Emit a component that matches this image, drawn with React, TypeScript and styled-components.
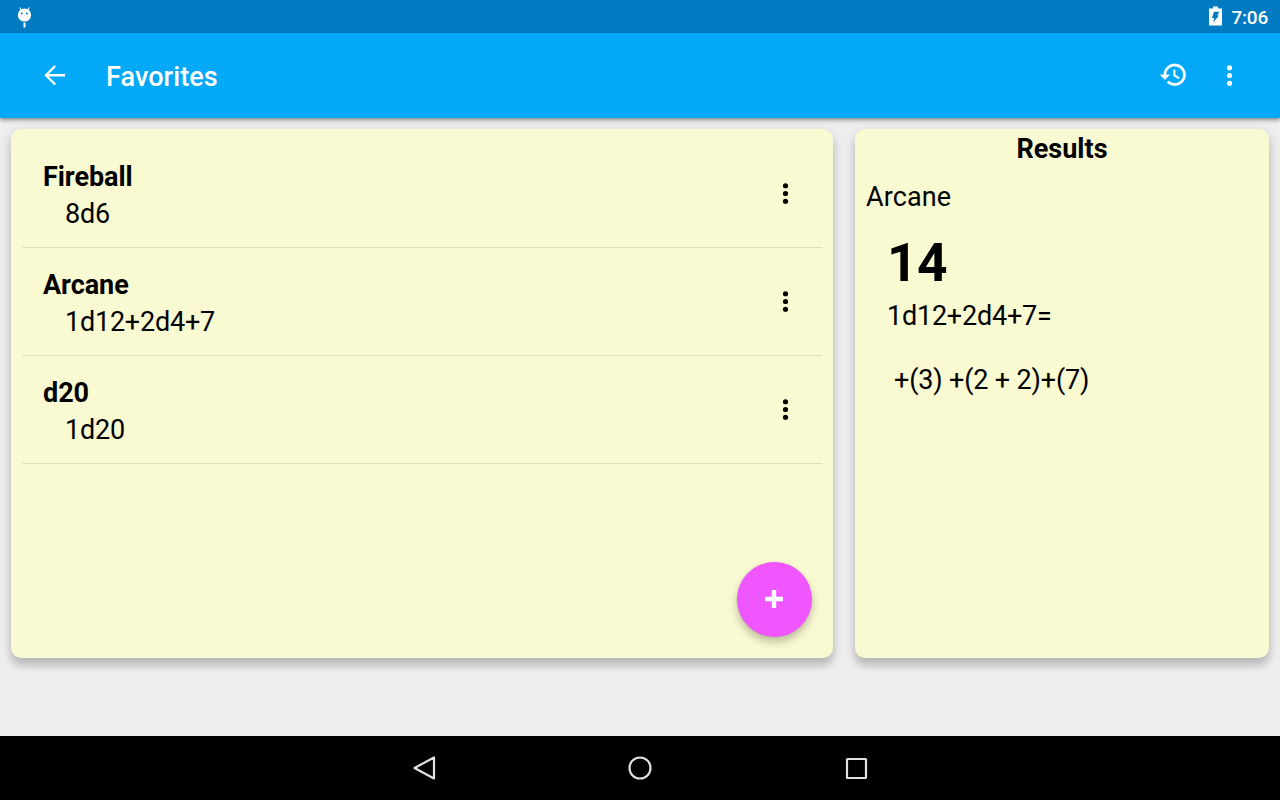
import React from "react";
import styled, { createGlobalStyle } from "styled-components";

const Global = createGlobalStyle`
  * { box-sizing: border-box; }
  body { margin: 0; font-family: Roboto, sans-serif; background: #eee; }
`;

const Screen = styled.div`
  width: 1280px;
  height: 800px;
  display: flex;
  flex-direction: column;
  overflow: hidden;
  background: #eee;
  color: #000;
`;

const StatusBar = styled.header`
  height: 33px;
  flex: none;
  display: flex;
  align-items: center;
  justify-content: space-between;
  padding: 0 12px 0 17px;
  background: #007ac1;
  color: #fff;
`;

const StatusGroup = styled.div`
  display: flex;
  align-items: flex-start;
  gap: 9px;
`;

const Clock = styled.span`
  font-size: 19px;
  font-weight: 500;
  line-height: 22px;
  padding-top: 2px;
  letter-spacing: -0.2px;
`;

const AppBar = styled.nav`
  height: 85px;
  flex: none;
  display: flex;
  align-items: center;
  padding: 0 35px 1px 39px;
  background: #03a9f6;
  color: #fff;
  box-shadow: 0 2px 4px rgba(0, 0, 0, 0.42);
`;

const Title = styled.h1`
  flex: 1;
  margin: 0 0 0 35px;
  padding-top: 4px;
  font-size: 27px;
  line-height: 32px;
  font-weight: 500;
  letter-spacing: 0.08px;
`;

const IconButton = styled.button<{ $gap?: number }>`
  display: flex;
  border: 0;
  padding: 0;
  margin-left: ${(p) => p.$gap ?? 0}px;
  background: none;
  color: inherit;
`;

const Content = styled.main`
  flex: 1;
  display: flex;
  align-items: flex-start;
  gap: 22px;
  padding: 11px 11px 0;
`;

const Card = styled.section<{ $width: number }>`
  width: ${(p) => p.$width}px;
  height: 529px;
  border-radius: 10px;
  background: #f9f9d2;
  box-shadow: 0 9px 7px rgba(0, 0, 0, 0.11), 0 4px 12px rgba(0, 0, 0, 0.17);
`;

const FavoritesCard = styled(Card)`
  display: flex;
  flex-direction: column;
  justify-content: space-between;
  padding: 11px 11px 21px;
`;

const List = styled.ul`
  list-style: none;
  margin: 0;
  padding: 0;
`;

const Row = styled.li`
  height: 108px;
  display: flex;
  justify-content: space-between;
  padding: 19px 21px 0;
  border-bottom: 1px solid #dfdfbc;
`;

const RowText = styled.div`
  font-size: 27px;
  line-height: 37px;
`;

const Name = styled.div`
  font-weight: 700;
  letter-spacing: -0.05px;
`;

const Formula = styled.div`
  padding-left: 22px;
  letter-spacing: -0.22px;
`;

const RowMenu = styled(IconButton)`
  height: 32px;
  margin-top: 18px;
`;

const AddButton = styled.button`
  align-self: flex-end;
  display: flex;
  align-items: center;
  justify-content: center;
  width: 75px;
  height: 75px;
  margin-right: 10px;
  padding: 0;
  border: 0;
  border-radius: 50%;
  background: #f056ff;
  box-shadow: 0 5px 8px rgba(0, 0, 0, 0.24), 0 0 2px rgba(0, 0, 0, 0.12);
`;

const ResultsCard = styled(Card)`
  padding: 4px 11px;
  font-size: 27px;
  line-height: 32px;
`;

const ResultsTitle = styled.h2`
  margin: 0;
  font-size: inherit;
  text-align: center;
`;

const ResultName = styled.div`
  margin-top: 16px;
  letter-spacing: 0.12px;
`;

const Total = styled.div`
  padding-left: 21px;
  margin-top: 18px;
  font-size: 53.25px;
  line-height: 64px;
  font-weight: 700;
  letter-spacing: -0.5px;
`;

const Expression = styled.div`
  padding-left: 21px;
  margin-top: 5px;
  letter-spacing: -0.22px;
`;

const Breakdown = styled.div`
  padding-left: 21.5px;
  margin-top: 32px;
  letter-spacing: -0.16px;
  white-space: pre;
`;

const NavBar = styled.footer`
  height: 64px;
  flex: none;
  display: flex;
  align-items: center;
  justify-content: center;
  gap: 184px;
  background: #000;
`;

const MoreIcon = () => (
  <svg width="32" height="32" viewBox="0 0 32 32" fill="currentColor">
    <circle cx="16.500" cy="8.750" r="2.600" />
    <circle cx="16.500" cy="16.500" r="2.600" />
    <circle cx="16.500" cy="24.250" r="2.600" />
  </svg>
);

const BackIcon = () => (
  <svg width="32" height="32" viewBox="0.200 0 24 24" fill="currentColor">
    <path d="M19.700 11.300H7.500l5.400-5.400L11.700 4.700l-7.500 7.500 7.500 7.500 1.300-1.200L7.500 13.100H19.700z" />
  </svg>
);

const HistoryIcon = () => (
  <svg width="32" height="32" viewBox="-0.600 0.200 24 24" fill="currentColor">
    <path d="M11.900 3.750c-4.550 0-8.230 3.700-8.230 8.250H.92l3.570 3.570.04.13 3.700-3.700H5.500c0-3.540 2.870-6.420 6.420-6.420 3.540 0 6.400 2.880 6.400 6.420s-2.860 6.420-6.400 6.420c-1.780 0-3.380-.73-4.540-1.900l-1.300 1.300c1.500 1.500 3.550 2.430 5.830 2.430 4.580 0 8.280-3.700 8.280-8.250 0-4.560-3.700-8.250-8.260-8.250zM11 8.330v4.600l3.920 2.300.66-1.100-3.200-1.900v-3.900H11z" stroke="currentColor" strokeWidth="0.200" />
  </svg>
);

const DebugIcon = () => (
  <svg width="15" height="22" viewBox="0 0 15 22">
    <path d="M2.500 1.500 4.500 4M12.500 1.500 10.500 4" stroke="#fff" strokeWidth="1.200" />
    <circle cx="7.500" cy="9" r="6.600" fill="#fff" />
    <circle cx="4.800" cy="7.500" r="0.900" fill="#007ac1" />
    <circle cx="10" cy="7.500" r="0.900" fill="#007ac1" />
    <path d="M7.500 16.500V21.500" stroke="#fff" strokeWidth="2" />
  </svg>
);

const BatteryIcon = () => (
  <svg width="13" height="24" viewBox="0 -1.500 13 24">
    <path d="M4 0h5v2h4v17H0V2h4z" fill="#fff" />
    <path d="M5 5.300h5.200L8.300 9H10L4 16.200 5.300 11.400H3z" fill="#007ac1" />
  </svg>
);

const favorites = [
  { name: "Fireball", formula: "8d6" },
  { name: "Arcane", formula: "1d12+2d4+7" },
  { name: "d20", formula: "1d20" },
];

export default function App() {
  return (
    <Screen>
      <Global />
      <StatusBar>
        <DebugIcon />
        <StatusGroup>
          <BatteryIcon />
          <Clock>7:06</Clock>
        </StatusGroup>
      </StatusBar>
      <AppBar>
        <IconButton aria-label="Back"><BackIcon /></IconButton>
        <Title>Favorites</Title>
        <IconButton aria-label="History"><HistoryIcon /></IconButton>
        <IconButton aria-label="More" $gap={23}><MoreIcon /></IconButton>
      </AppBar>
      <Content>
        <FavoritesCard $width={822}>
          <List>
            {favorites.map((f) => (
              <Row key={f.name}>
                <RowText>
                  <Name>{f.name}</Name>
                  <Formula>{f.formula}</Formula>
                </RowText>
                <RowMenu aria-label="Options"><MoreIcon /></RowMenu>
              </Row>
            ))}
          </List>
          <AddButton aria-label="Add">
            <svg width="19" height="19" viewBox="0 0 19 19">
              <path d="M9 0v18M0 9h18" stroke="#fff" strokeWidth="4.400" />
            </svg>
          </AddButton>
        </FavoritesCard>
        <ResultsCard $width={414}>
          <ResultsTitle>Results</ResultsTitle>
          <ResultName>Arcane</ResultName>
          <Total>14</Total>
          <Expression>1d12+2d4+7=</Expression>
          <Breakdown>{" +(3) +(2 + 2)+(7)"}</Breakdown>
        </ResultsCard>
      </Content>
      <NavBar>
        <svg width="32" height="32" viewBox="0 0 32 32">
          <path d="M26 5.500v21L6.500 16z" fill="none" stroke="#e2e2e2" strokeWidth="2.200" strokeLinejoin="round" />
        </svg>
        <svg width="32" height="32" viewBox="0 0 32 32">
          <circle cx="16" cy="16" r="10.500" fill="none" stroke="#e2e2e2" strokeWidth="2.200" />
        </svg>
        <svg width="32" height="32" viewBox="0 0 32 32">
          <rect x="7" y="7" width="19" height="19" rx="0.500" fill="none" stroke="#e2e2e2" strokeWidth="2.200" />
        </svg>
      </NavBar>
    </Screen>
  );
}
